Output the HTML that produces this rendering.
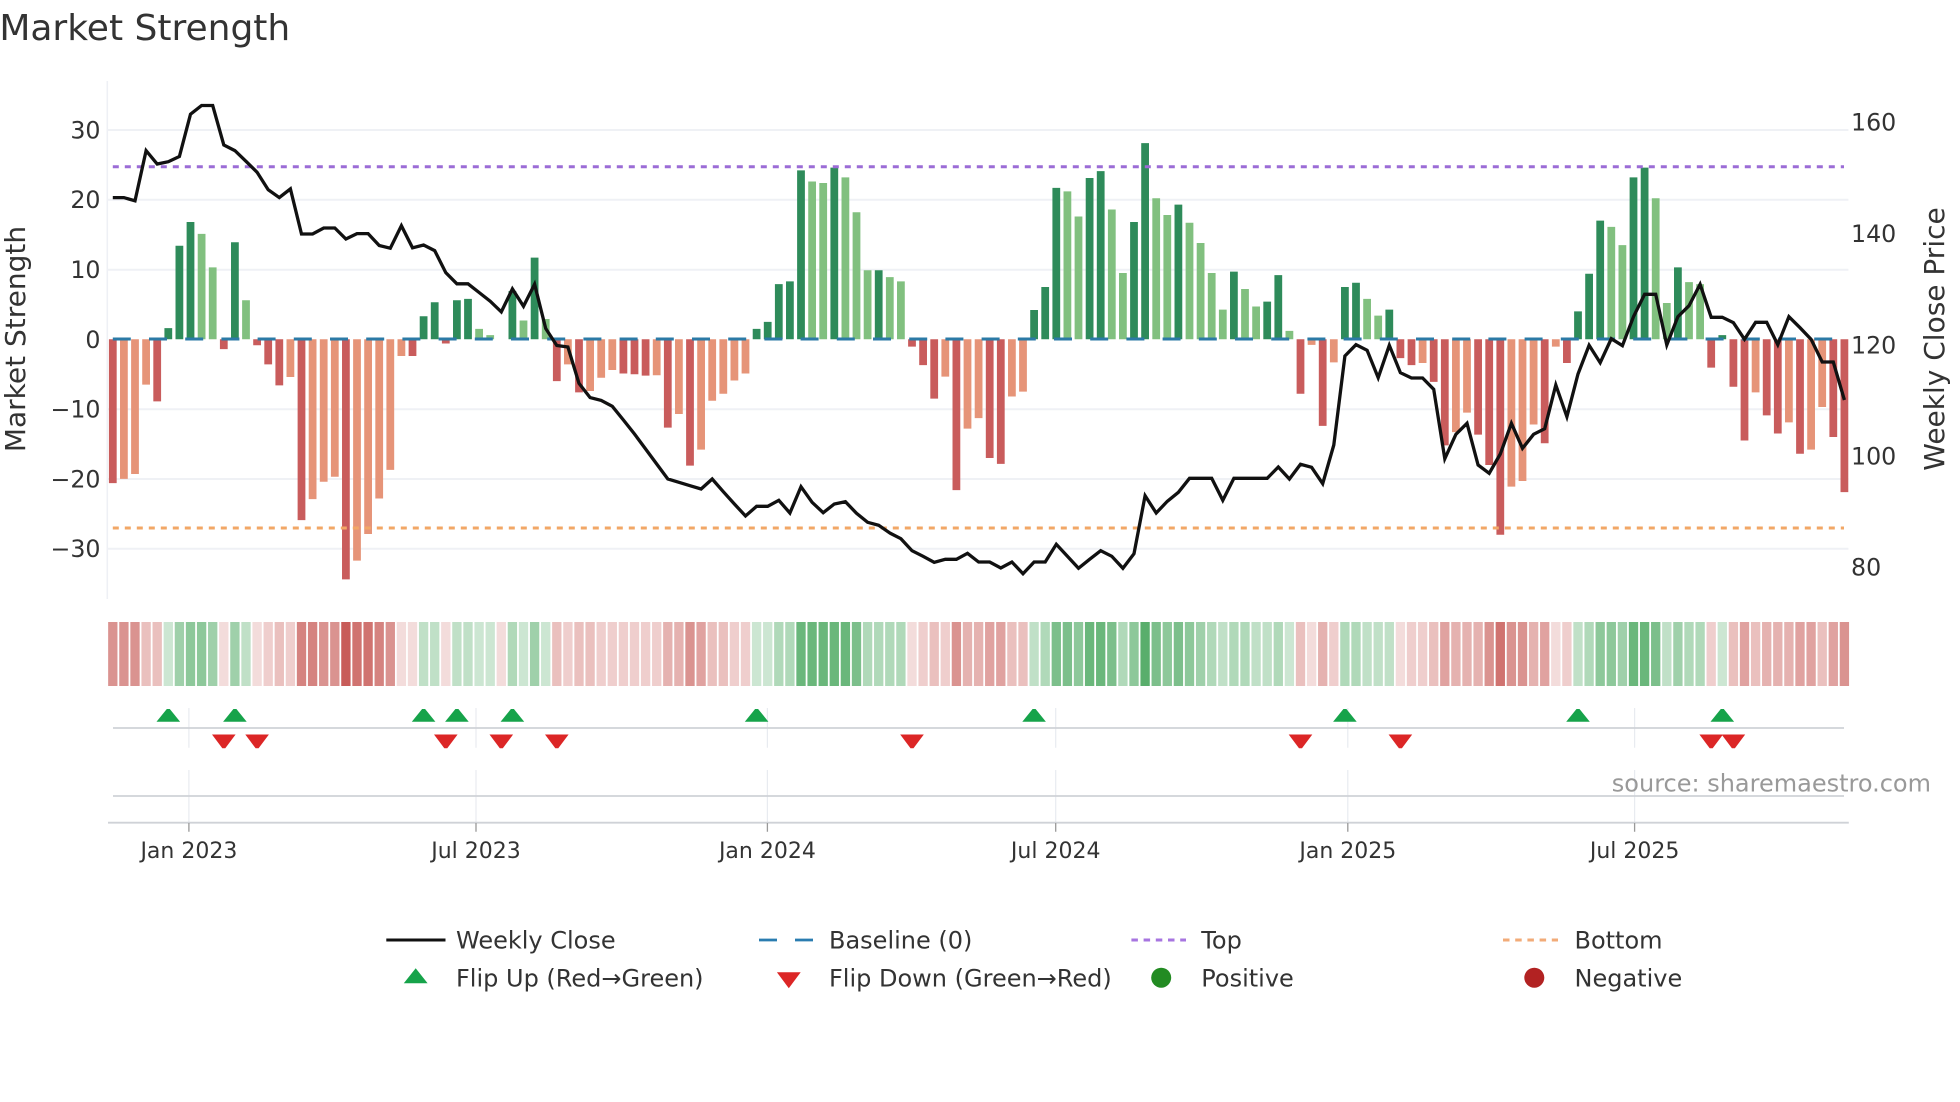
<!DOCTYPE html>
<html lang="en"><head><meta charset="utf-8"><title>Market Strength</title>
<style>
html,body{margin:0;padding:0;background:#fff;width:1960px;height:1102px;overflow:hidden}
svg{display:block}
text{font-family:"DejaVu Sans","Liberation Sans",sans-serif;fill:#333}
.t{font-size:23.7px}
.x{font-size:22px;text-anchor:middle}
.l{font-size:24px}
</style></head><body>
<svg width="1960" height="1102" viewBox="0 0 1960 1102" xmlns="http://www.w3.org/2000/svg">
<rect width="1960" height="1102" fill="#fff"/>
<text x="-0.7" y="40" style="font-size:36px">Market Strength</text>

<!-- grid -->
<path d="M107.3 81V599" stroke="#eef0f5" stroke-width="1.5" fill="none"/>
<path d="M107.3 130H1848.4M107.3 199.7H1848.4M107.3 269.7H1848.4M107.3 409.3H1848.4M107.3 479H1848.4M107.3 548.7H1848.4" stroke="#eff1f5" stroke-width="2" fill="none"/>

<!-- bars -->
<g transform="translate(108.915,339.3) scale(11.1,-6.98)">
<path fill="#2e8b5a" d="M5 0V1.6h.7V0zM6 0V13.4h.7V0zM7 0V16.8h.7V0zM11 0V13.9h.7V0zM28 0V3.3h.7V0zM29 0V5.3h.7V0zM31 0V5.6h.7V0zM32 0V5.8h.7V0zM36 0V6.9h.7V0zM38 0V11.7h.7V0zM58 0V1.5h.7V0zM59 0V2.5h.7V0zM60 0V7.9h.7V0zM61 0V8.3h.7V0zM62 0V24.2h.7V0zM65 0V24.6h.7V0zM69 0V9.9h.7V0zM83 0V4.2h.7V0zM84 0V7.5h.7V0zM85 0V21.7h.7V0zM88 0V23.1h.7V0zM89 0V24.1h.7V0zM92 0V16.8h.7V0zM93 0V28.1h.7V0zM96 0V19.3h.7V0zM101 0V9.7h.7V0zM104 0V5.4h.7V0zM105 0V9.2h.7V0zM111 0V7.5h.7V0zM112 0V8.1h.7V0zM115 0V4.25h.7V0zM132 0V4h.7V0zM133 0V9.4h.7V0zM134 0V17h.7V0zM137 0V23.2h.7V0zM138 0V24.6h.7V0zM141 0V10.3h.7V0zM145 0V.6h.7V0z"/>
<path fill="#81c07f" d="M8 0V15.1h.7V0zM9 0V10.3h.7V0zM12 0V5.6h.7V0zM33 0V1.5h.7V0zM34 0V.6h.7V0zM37 0V2.7h.7V0zM39 0V2.9h.7V0zM63 0V22.6h.7V0zM64 0V22.4h.7V0zM66 0V23.2h.7V0zM67 0V18.2h.7V0zM68 0V9.9h.7V0zM70 0V8.9h.7V0zM71 0V8.3h.7V0zM86 0V21.2h.7V0zM87 0V17.6h.7V0zM90 0V18.6h.7V0zM91 0V9.5h.7V0zM94 0V20.2h.7V0zM95 0V17.8h.7V0zM97 0V16.7h.7V0zM98 0V13.8h.7V0zM99 0V9.5h.7V0zM100 0V4.25h.7V0zM102 0V7.2h.7V0zM103 0V4.7h.7V0zM106 0V1.2h.7V0zM113 0V5.8h.7V0zM114 0V3.4h.7V0zM135 0V16.1h.7V0zM136 0V13.5h.7V0zM139 0V20.2h.7V0zM140 0V5.2h.7V0zM142 0V8.2h.7V0zM143 0V7.9h.7V0z"/>
<path fill="#c95c5c" d="M0 0V-20.6h.7V0zM4 0V-8.9h.7V0zM10 0V-1.4h.7V0zM13 0V-.85h.7V0zM14 0V-3.6h.7V0zM15 0V-6.6h.7V0zM17 0V-25.9h.7V0zM21 0V-34.4h.7V0zM27 0V-2.4h.7V0zM30 0V-.6h.7V0zM40 0V-6h.7V0zM42 0V-7.6h.7V0zM46 0V-4.9h.7V0zM47 0V-5h.7V0zM48 0V-5.2h.7V0zM50 0V-12.65h.7V0zM52 0V-18.1h.7V0zM72 0V-1.05h.7V0zM73 0V-3.7h.7V0zM74 0V-8.5h.7V0zM76 0V-21.6h.7V0zM79 0V-17h.7V0zM80 0V-17.85h.7V0zM107 0V-7.8h.7V0zM109 0V-12.4h.7V0zM116 0V-2.7h.7V0zM117 0V-3.7h.7V0zM119 0V-6.1h.7V0zM120 0V-15.2h.7V0zM123 0V-13.65h.7V0zM124 0V-18h.7V0zM125 0V-28h.7V0zM129 0V-14.9h.7V0zM131 0V-3.4h.7V0zM144 0V-4.05h.7V0zM146 0V-6.8h.7V0zM147 0V-14.5h.7V0zM149 0V-10.9h.7V0zM150 0V-13.5h.7V0zM152 0V-16.4h.7V0zM155 0V-14h.7V0zM156 0V-21.9h.7V0z"/>
<path fill="#e69478" d="M1 0V-20h.7V0zM2 0V-19.3h.7V0zM3 0V-6.5h.7V0zM16 0V-5.4h.7V0zM18 0V-22.9h.7V0zM19 0V-20.4h.7V0zM20 0V-19.7h.7V0zM22 0V-31.7h.7V0zM23 0V-27.9h.7V0zM24 0V-22.8h.7V0zM25 0V-18.7h.7V0zM26 0V-2.4h.7V0zM41 0V-3.6h.7V0zM43 0V-7.4h.7V0zM44 0V-5.5h.7V0zM45 0V-4.4h.7V0zM49 0V-5.15h.7V0zM51 0V-10.7h.7V0zM53 0V-15.8h.7V0zM54 0V-8.8h.7V0zM55 0V-7.8h.7V0zM56 0V-5.9h.7V0zM57 0V-4.9h.7V0zM75 0V-5.35h.7V0zM77 0V-12.8h.7V0zM78 0V-11.3h.7V0zM81 0V-8.2h.7V0zM82 0V-7.5h.7V0zM108 0V-.8h.7V0zM110 0V-3.3h.7V0zM118 0V-3.4h.7V0zM121 0V-13.3h.7V0zM122 0V-10.5h.7V0zM126 0V-21.1h.7V0zM127 0V-20.3h.7V0zM128 0V-12.2h.7V0zM130 0V-1.05h.7V0zM148 0V-7.6h.7V0zM151 0V-11.9h.7V0zM153 0V-15.8h.7V0zM154 0V-9.7h.7V0z"/>
</g>

<!-- reference lines -->
<path d="M112.8 166.7H1844" stroke="#9b6cd6" stroke-width="3" stroke-dasharray="6 6" fill="none"/>
<path d="M112.8 528H1844" stroke="#f2a766" stroke-width="3" stroke-dasharray="6 6" fill="none"/>
<path d="M112.8 339H1844" stroke="#2b7aa6" stroke-width="3" stroke-dasharray="18 18.2" fill="none"/>

<!-- price line -->
<polyline transform="translate(112.8,0) scale(11.1,1)" fill="none" stroke="#111" stroke-width="3.3" stroke-linejoin="miter" vector-effect="non-scaling-stroke" points="0,197.6 1,197.6 2,200.8 3,150.6 4,164 5,161.7 6,156.5 7,114.2 8,105.5 9,105.5 10,145 11,150.6 12,161.3 13,172.3 14,189.7 15,197.6 16,188.9 17,234 18,234 19,228 20,228 21,239 22,233.6 23,233.6 24,245.5 25,248.2 26,225.7 27,247.8 28,245 29,250.6 30,272.7 31,283.8 32,283.8 33,292.5 34,301.2 35,311.9 36,288.9 37,306.3 38,284.2 39,328.5 40,345.5 41,347 42,383.4 43,397.6 44,400.4 45,406.3 46,420 47,434 48,449 49,464 50,479 51,482.3 52,485.7 53,489 54,479 55,491.7 56,504 57,516 58,506.3 59,506.3 60,500.3 61,513 62,486.7 63,502.3 64,512.7 65,504 66,501.7 67,513.3 68,522.3 69,525.3 70,533 71,538.7 72,550.7 73,556.3 74,562.3 75,559.3 76,559.3 77,553.3 78,562 79,562 80,568 81,562 82,573.7 83,562 84,562 85,544.3 86,556.3 87,568.3 88,559.3 89,550.7 90,556.3 91,568.3 92,553.7 93,495.7 94,513 95,501.3 96,492.3 97,478.3 98,478.3 99,478.3 100,500.3 101,478.3 102,478.3 103,478.3 104,478.3 105,467 106,479 107,464.3 108,467.3 109,483.7 110,445 111,356 112,344.7 113,350.3 114,377.7 115,345.3 116,372.7 117,378 118,378 119,389.3 120,458.7 121,434.3 122,423.3 123,465 124,473.3 125,454 126,423.3 127,448.3 128,434.3 129,428.7 130,385 131,416.7 132,374 133,345.3 134,362.7 135,338.7 136,345.7 137,316.7 138,294.3 139,294.3 140,345 141,316.7 142,305.7 143,284.3 144,317.3 145,317.3 146,322.7 147,339.3 148,322.3 149,322.3 150,344.7 151,316.7 152,327.7 153,339.3 154,362 155,362 156,400"/>

<!-- axis labels -->
<g text-anchor="end">
<text class="t" x="100.5" y="138.5">30</text>
<text class="t" x="100.5" y="208">20</text>
<text class="t" x="100.5" y="278">10</text>
<text class="t" x="100.5" y="348">0</text>
<text class="t" x="100.5" y="417.5">−10</text>
<text class="t" x="100.5" y="487.5">−20</text>
<text class="t" x="100.5" y="557">−30</text>
</g>
<text class="t" x="1851" y="130.7">160</text>
<text class="t" x="1851" y="241.9">140</text>
<text class="t" x="1851" y="353.5">120</text>
<text class="t" x="1851" y="464.6">100</text>
<text class="t" x="1851" y="575.7">80</text>
<text transform="translate(25,339) rotate(-90)" text-anchor="middle" style="font-size:28px">Market Strength</text>
<text transform="translate(1944,339) rotate(-90)" text-anchor="middle" style="font-size:28px">Weekly Close Price</text>

<!-- heat strip -->
<g transform="translate(108.14,622) scale(11.1,64)">
<g fill="#c4504c">
<path fill-opacity=".2" d="M10 0h.84v1h-.84zM13 0h.84v1h-.84zM26 0h.84v1h-.84zM27 0h.84v1h-.84zM30 0h.84v1h-.84zM35 0h.84v1h-.84zM72 0h.84v1h-.84zM108 0h.84v1h-.84zM116 0h.84v1h-.84zM130 0h.84v1h-.84z"/>
<path fill-opacity=".28" d="M14 0h.84v1h-.84zM16 0h.84v1h-.84zM41 0h.84v1h-.84zM44 0h.84v1h-.84zM45 0h.84v1h-.84zM46 0h.84v1h-.84zM47 0h.84v1h-.84zM48 0h.84v1h-.84zM49 0h.84v1h-.84zM56 0h.84v1h-.84zM57 0h.84v1h-.84zM73 0h.84v1h-.84zM75 0h.84v1h-.84zM110 0h.84v1h-.84zM117 0h.84v1h-.84zM118 0h.84v1h-.84zM131 0h.84v1h-.84zM144 0h.84v1h-.84z"/>
<path fill-opacity=".36" d="M3 0h.84v1h-.84zM4 0h.84v1h-.84zM15 0h.84v1h-.84zM40 0h.84v1h-.84zM42 0h.84v1h-.84zM43 0h.84v1h-.84zM54 0h.84v1h-.84zM55 0h.84v1h-.84zM74 0h.84v1h-.84zM81 0h.84v1h-.84zM82 0h.84v1h-.84zM107 0h.84v1h-.84zM119 0h.84v1h-.84zM146 0h.84v1h-.84zM148 0h.84v1h-.84zM154 0h.84v1h-.84z"/>
<path fill-opacity=".44" d="M50 0h.84v1h-.84zM51 0h.84v1h-.84zM77 0h.84v1h-.84zM78 0h.84v1h-.84zM109 0h.84v1h-.84zM121 0h.84v1h-.84zM122 0h.84v1h-.84zM123 0h.84v1h-.84zM128 0h.84v1h-.84zM149 0h.84v1h-.84zM150 0h.84v1h-.84zM151 0h.84v1h-.84z"/>
<path fill-opacity=".53" d="M53 0h.84v1h-.84zM79 0h.84v1h-.84zM80 0h.84v1h-.84zM120 0h.84v1h-.84zM129 0h.84v1h-.84zM147 0h.84v1h-.84zM152 0h.84v1h-.84zM153 0h.84v1h-.84zM155 0h.84v1h-.84z"/>
<path fill-opacity=".62" d="M0 0h.84v1h-.84zM1 0h.84v1h-.84zM2 0h.84v1h-.84zM19 0h.84v1h-.84zM20 0h.84v1h-.84zM25 0h.84v1h-.84zM52 0h.84v1h-.84zM76 0h.84v1h-.84zM124 0h.84v1h-.84zM126 0h.84v1h-.84zM127 0h.84v1h-.84zM156 0h.84v1h-.84z"/>
<path fill-opacity=".71" d="M17 0h.84v1h-.84zM18 0h.84v1h-.84zM24 0h.84v1h-.84z"/>
<path fill-opacity=".8" d="M22 0h.84v1h-.84zM23 0h.84v1h-.84zM125 0h.84v1h-.84z"/>
<path fill-opacity=".93" d="M21 0h.84v1h-.84z"/>
</g>
<g fill="#50aa64">
<path fill-opacity=".29" d="M5 0h.84v1h-.84zM33 0h.84v1h-.84zM34 0h.84v1h-.84zM37 0h.84v1h-.84zM39 0h.84v1h-.84zM58 0h.84v1h-.84zM59 0h.84v1h-.84zM106 0h.84v1h-.84zM145 0h.84v1h-.84z"/>
<path fill-opacity=".36" d="M12 0h.84v1h-.84zM28 0h.84v1h-.84zM29 0h.84v1h-.84zM31 0h.84v1h-.84zM32 0h.84v1h-.84zM83 0h.84v1h-.84zM100 0h.84v1h-.84zM103 0h.84v1h-.84zM104 0h.84v1h-.84zM113 0h.84v1h-.84zM114 0h.84v1h-.84zM115 0h.84v1h-.84zM132 0h.84v1h-.84zM140 0h.84v1h-.84z"/>
<path fill-opacity=".45" d="M36 0h.84v1h-.84zM60 0h.84v1h-.84zM61 0h.84v1h-.84zM68 0h.84v1h-.84zM69 0h.84v1h-.84zM70 0h.84v1h-.84zM71 0h.84v1h-.84zM84 0h.84v1h-.84zM91 0h.84v1h-.84zM99 0h.84v1h-.84zM101 0h.84v1h-.84zM102 0h.84v1h-.84zM105 0h.84v1h-.84zM111 0h.84v1h-.84zM112 0h.84v1h-.84zM133 0h.84v1h-.84zM142 0h.84v1h-.84zM143 0h.84v1h-.84z"/>
<path fill-opacity=".55" d="M6 0h.84v1h-.84zM9 0h.84v1h-.84zM11 0h.84v1h-.84zM38 0h.84v1h-.84zM98 0h.84v1h-.84zM136 0h.84v1h-.84zM141 0h.84v1h-.84z"/>
<path fill-opacity=".65" d="M7 0h.84v1h-.84zM8 0h.84v1h-.84zM87 0h.84v1h-.84zM92 0h.84v1h-.84zM95 0h.84v1h-.84zM97 0h.84v1h-.84zM134 0h.84v1h-.84zM135 0h.84v1h-.84z"/>
<path fill-opacity=".75" d="M67 0h.84v1h-.84zM85 0h.84v1h-.84zM86 0h.84v1h-.84zM90 0h.84v1h-.84zM94 0h.84v1h-.84zM96 0h.84v1h-.84zM139 0h.84v1h-.84z"/>
<path fill-opacity=".85" d="M62 0h.84v1h-.84zM63 0h.84v1h-.84zM64 0h.84v1h-.84zM65 0h.84v1h-.84zM66 0h.84v1h-.84zM88 0h.84v1h-.84zM89 0h.84v1h-.84zM137 0h.84v1h-.84zM138 0h.84v1h-.84z"/>
<path fill-opacity=".95" d="M93 0h.84v1h-.84z"/>
</g>
</g>

<!-- lower panel -->
<path d="M188.9 708V747.7M188.9 770V822M476 708V747.7M476 770V822M767.4 708V747.7M767.4 770V822M1055.7 708V747.7M1055.7 770V822M1347.8 708V747.7M1347.8 770V822M1634.6 708V747.7M1634.6 770V822" stroke="#e8ebf0" stroke-width="1.2" fill="none"/>
<path d="M113 728H1844M113 796H1844M108 822.7H1848.8" stroke="#cfd2d7" stroke-width="1.8" fill="none"/>
<path d="M188.9 823V831.7M476 823V831.7M767.4 823V831.7M1055.7 823V831.7M1347.8 823V831.7M1634.6 823V831.7" stroke="#999" stroke-width="1.3" fill="none"/>

<g fill="#16a34a">
<path d="M168.3 709m-1.5 0h3l10.3 12.7h-23.6z"/>
<path d="M234.9 709m-1.5 0h3l10.3 12.7h-23.6z"/>
<path d="M423.6 709m-1.5 0h3l10.3 12.7h-23.6z"/>
<path d="M456.9 709m-1.5 0h3l10.3 12.7h-23.6z"/>
<path d="M512.4 709m-1.5 0h3l10.3 12.7h-23.6z"/>
<path d="M756.6 709m-1.5 0h3l10.3 12.7h-23.6z"/>
<path d="M1034.1 709m-1.5 0h3l10.3 12.7h-23.6z"/>
<path d="M1344.9 709m-1.5 0h3l10.3 12.7h-23.6z"/>
<path d="M1578 709m-1.5 0h3l10.3 12.7h-23.6z"/>
<path d="M1722.3 709m-1.5 0h3l10.3 12.7h-23.6z"/>
</g>
<g fill="#dc2626">
<path d="M223.8 748.3m-1.5 0h3l10.3-13.8h-23.6z"/>
<path d="M257.1 748.3m-1.5 0h3l10.3-13.8h-23.6z"/>
<path d="M445.8 748.3m-1.5 0h3l10.3-13.8h-23.6z"/>
<path d="M501.3 748.3m-1.5 0h3l10.3-13.8h-23.6z"/>
<path d="M556.8 748.3m-1.5 0h3l10.3-13.8h-23.6z"/>
<path d="M912 748.3m-1.5 0h3l10.3-13.8h-23.6z"/>
<path d="M1300.5 748.3m-1.5 0h3l10.3-13.8h-23.6z"/>
<path d="M1400.4 748.3m-1.5 0h3l10.3-13.8h-23.6z"/>
<path d="M1711.2 748.3m-1.5 0h3l10.3-13.8h-23.6z"/>
<path d="M1733.4 748.3m-1.5 0h3l10.3-13.8h-23.6z"/>
</g>

<text class="x" x="188.9" y="858">Jan 2023</text>
<text class="x" x="476" y="858">Jul 2023</text>
<text class="x" x="767.4" y="858">Jan 2024</text>
<text class="x" x="1055.7" y="858">Jul 2024</text>
<text class="x" x="1347.8" y="858">Jan 2025</text>
<text class="x" x="1634.6" y="858">Jul 2025</text>

<text x="1931" y="791.7" text-anchor="end" style="font-size:24px;fill:#999">source: sharemaestro.com</text>

<!-- legend -->
<path d="M386.3 940H445.5" stroke="#111" stroke-width="3" fill="none"/>
<text class="l" x="456" y="948.5">Weekly Close</text>
<path d="M759 940H777M795 940H813" stroke="#2a7cb0" stroke-width="2.8" fill="none"/>
<text class="l" x="829" y="948.5">Baseline (0)</text>
<path d="M1131.4 940H1186" stroke="#a775e0" stroke-width="3" stroke-dasharray="6.5 5.7" fill="none"/>
<text class="l" x="1201.3" y="948.5">Top</text>
<path d="M1503 940H1558" stroke="#f2ab78" stroke-width="3" stroke-dasharray="6.5 5.7" fill="none"/>
<text class="l" x="1574.5" y="948.5">Bottom</text>

<path d="M415.7 968.3l11.9 15h-23.8z" fill="#16a34a"/>
<text class="l" x="456" y="986.5">Flip Up (Red→Green)</text>
<path d="M788.8 988.3l-11.9-16h23.8z" fill="#dc2626"/>
<text class="l" x="829" y="986.5">Flip Down (Green→Red)</text>
<circle cx="1161.2" cy="977.7" r="10" fill="#228b22"/>
<text class="l" x="1201.3" y="986.5">Positive</text>
<circle cx="1534.3" cy="977.7" r="10" fill="#b22222"/>
<text class="l" x="1574.5" y="986.5">Negative</text>
</svg>
</body></html>
